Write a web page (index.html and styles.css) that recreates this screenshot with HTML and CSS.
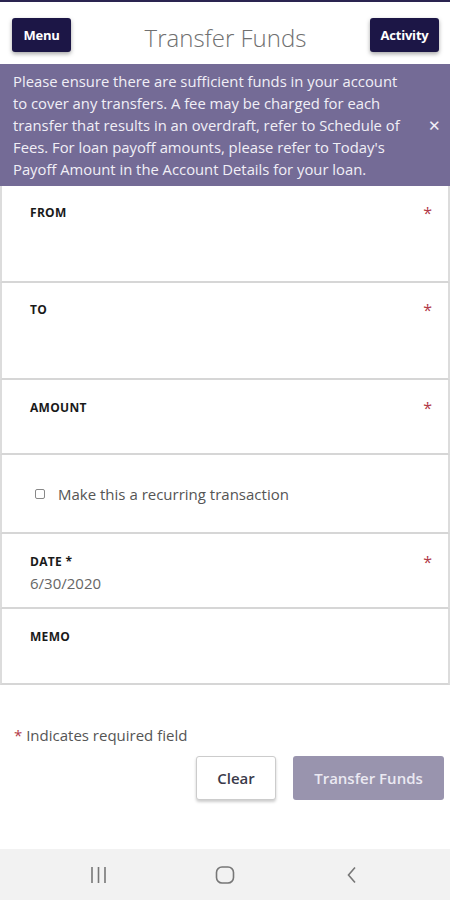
FILE: index.html
```html
<html>

<head>
    <title>Transfer Funds</title>
    <link rel="stylesheet" href="styles.css">
</head>

<body>
    <div class="topline"></div>
    <header class="header">
        <button class="nav-button menu">Menu</button>
        <h1 class="title">Transfer Funds</h1>
        <button class="nav-button activity">Activity</button>
    </header>

    <div class="notice">
        <p class="notice-text">Please ensure there are sufficient funds in your account to cover any transfers. A fee may be charged for each transfer that results in an overdraft, refer to Schedule of Fees. For loan payoff amounts, please refer to Today's Payoff Amount in the Account Details for your loan.</p>
        <span class="notice-close">&#x2715;</span>
    </div>

    <main class="form">
        <div class="field field-tall">
            <label class="field-label">FROM</label>
            <span class="required">*</span>
        </div>
        <div class="field field-tall">
            <label class="field-label">TO</label>
            <span class="required">*</span>
        </div>
        <div class="field field-short">
            <label class="field-label">AMOUNT</label>
            <span class="required">*</span>
        </div>
        <div class="field field-check">
            <label class="check-row"><span class="checkbox"></span>Make this a recurring transaction</label>
        </div>
        <div class="field field-short">
            <div>
                <label class="field-label">DATE *</label>
                <div class="field-value">6/30/2020</div>
            </div>
            <span class="required">*</span>
        </div>
        <div class="field field-short field-memo">
            <label class="field-label">MEMO</label>
        </div>
    </main>

    <p class="note"><span class="note-star">*</span> Indicates required field</p>

    <div class="actions">
        <button class="btn-clear">Clear</button>
        <button class="btn-submit">Transfer Funds</button>
    </div>

    <nav class="system-bar">
        <svg width="20" height="20" viewBox="0 0 20 20">
            <path d="M3 2v16M9.5 2v16M16 2v16" stroke="#777" stroke-width="1.6" fill="none" />
        </svg>
        <svg width="20" height="20" viewBox="0 0 20 20">
            <rect x="1.5" y="2" width="17" height="16" rx="5.5" stroke="#777" stroke-width="1.6" fill="none" />
        </svg>
        <svg width="20" height="20" viewBox="0 0 20 20">
            <path d="M14 2.5l-6.5 7.5 6.5 7.5" stroke="#777" stroke-width="1.6" fill="none" />
        </svg>
    </nav>
</body>

</html>
```

FILE: styles.css
```css
body {
    margin: 0px;
    width: 450px;
    height: 900px;
    display: flex;
    flex-direction: column;
    background-color: white;
    font-family: 'Open Sans', 'Noto Sans', Arial, sans-serif;
    color: #333;
}

.topline {
    height: 2px;
    background-color: #2a2450;
}

.header {
    height: 62px;
    box-sizing: border-box;
    display: grid;
    grid-template-columns: 1fr auto 1fr;
    align-items: start;
    padding: 16px 11px 0px 12px;
}

.nav-button {
    height: 34px;
    border: 0px;
    border-radius: 3px;
    background-color: #1c1646;
    color: white;
    font-family: 'Open Sans', Arial, sans-serif;
    font-weight: bold;
    font-size: 13px;
    letter-spacing: -0.2px;
    box-shadow: 0px 2px 4px rgba(0, 0, 0, 0.35);
}

.menu {
    width: 59px;
    justify-self: start;
}

.activity {
    width: 69px;
    justify-self: end;
}

.title {
    margin: 0px;
    margin-top: 3px;
    font-size: 24px;
    font-weight: 300;
    color: #707070;
}

.notice {
    height: 122px;
    box-sizing: border-box;
    display: flex;
    align-items: center;
    background-color: #746b96;
    padding: 6px 0px 6px 13px;
}

.notice-text {
    margin: 0px;
    width: 402px;
    font-size: 14.8px;
    line-height: 22px;
    color: #f1eff6;
}

.notice-close {
    margin-left: 13px;
    font-size: 15px;
    color: #f1eff6;
}

.field {
    box-sizing: border-box;
    display: flex;
    justify-content: space-between;
    align-items: flex-start;
    border-left: 2px solid #dcdcdc;
    border-right: 2px solid #dcdcdc;
    border-bottom: 2px solid #d6d6d6;
    padding: 20px 16px 0px 28px;
}

.field-tall {
    height: 97px;
    padding-top: 19px;
}

.field-short {
    height: 75px;
}

.field-memo {
    height: 76px;
}

.field-check {
    height: 79px;
    align-items: center;
    padding: 0px 0px 0px 33px;
}

.field-label {
    font-size: 12px;
    font-weight: bold;
    letter-spacing: 0.3px;
    color: #1a1a1a;
    line-height: 16px;
}

.field-value {
    margin-top: 3px;
    font-size: 15px;
    color: #666;
}

.required {
    color: #b23a48;
    font-size: 16px;
    line-height: 16px;
}

.check-row {
    display: flex;
    align-items: center;
    font-size: 15px;
    color: #555;
}

.checkbox {
    width: 8px;
    height: 8px;
    border: 1px solid #888;
    border-radius: 2px;
    margin-right: 13px;
}

.note {
    margin: 40px 0px 0px 14px;
    font-size: 15px;
    color: #555;
}

.note-star {
    color: #b23a48;
}

.actions {
    display: flex;
    justify-content: flex-end;
    gap: 17px;
    margin-top: 11px;
    padding-right: 6px;
}

.btn-clear,
.btn-submit {
    height: 44px;
    border-radius: 3px;
    font-family: 'Open Sans', Arial, sans-serif;
    font-weight: 600;
    font-size: 15px;
}

.btn-clear {
    width: 80px;
    background-color: white;
    border: 1px solid #ccc;
    color: #3a3a4a;
    box-shadow: 0px 2px 3px rgba(0, 0, 0, 0.2);
}

.btn-submit {
    width: 151px;
    border: 0px;
    background-color: #9994ae;
    color: #ebe9f2;
}

.system-bar {
    margin-top: auto;
    height: 51px;
    background-color: #f2f2f2;
    display: flex;
    justify-content: center;
    align-items: center;
    gap: 106px;
}
```
